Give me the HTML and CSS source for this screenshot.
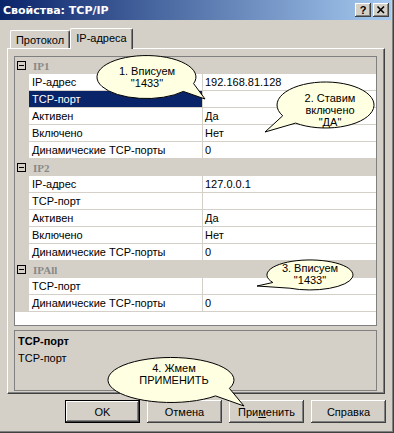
FILE: index.html
```html
<!DOCTYPE html>
<html>
  <head>
    <meta charset="utf-8" />
    <link rel="stylesheet" href="styles.css">
  </head>
  <body>
    <div class="window">
      <div class="titlebar">
        <div class="title">Свойства: TCP/IP</div>
        <div class="caption-buttons">
          <div class="caption-btn help">?</div>
          <div class="caption-btn">
            <svg width="16" height="14" viewBox="0 0 16 14">
              <path d="M4.5 3.5 L11 10 M11 3.5 L4.5 10" stroke="#000" stroke-width="1.6" fill="none" />
            </svg>
          </div>
        </div>
      </div>

      <div class="tabs">
        <div class="tab">Протокол</div>
        <div class="tab active">IP-адреса</div>
      </div>

      <div class="tab-panel">
        <div class="grid">
          <div class="category"><span class="expander"></span><span class="category-name">IP1</span></div>
          <div class="prop"><div class="name">IP-адрес</div><div class="value">192.168.81.128</div></div>
          <div class="prop selected"><div class="name">TCP-порт</div><div class="value"></div></div>
          <div class="prop"><div class="name">Активен</div><div class="value">Да</div></div>
          <div class="prop"><div class="name">Включено</div><div class="value">Нет</div></div>
          <div class="prop"><div class="name">Динамические TCP-порты</div><div class="value">0</div></div>

          <div class="category"><span class="expander"></span><span class="category-name">IP2</span></div>
          <div class="prop"><div class="name">IP-адрес</div><div class="value">127.0.0.1</div></div>
          <div class="prop"><div class="name">TCP-порт</div><div class="value"></div></div>
          <div class="prop"><div class="name">Активен</div><div class="value">Да</div></div>
          <div class="prop"><div class="name">Включено</div><div class="value">Нет</div></div>
          <div class="prop"><div class="name">Динамические TCP-порты</div><div class="value">0</div></div>

          <div class="category"><span class="expander"></span><span class="category-name">IPAll</span></div>
          <div class="prop"><div class="name">TCP-порт</div><div class="value"></div></div>
          <div class="prop"><div class="name">Динамические TCP-порты</div><div class="value">0</div></div>
        </div>

        <div class="description">
          <div class="description-title">TCP-порт</div>
          <div class="description-text">TCP-порт</div>
        </div>
      </div>

      <div class="buttons">
        <button class="button default">OK</button>
        <button class="button">Отмена</button>
        <button class="button">При<u>м</u>енить</button>
        <button class="button">Справка</button>
      </div>

      <!-- hint callouts drawn over the dialog -->
      <svg class="callouts" width="394" height="433" viewBox="0 0 394 433">
        <path class="bubble" d="M193.6 83.6 A49.5 21.5 0 1 0 183.3 91.4 L205 99 Z" />
        <text class="callout-text" x="147" y="75">1. Вписуем</text>
        <text class="callout-text" x="147" y="87">"1433"</text>

        <path class="bubble" d="M295.6 123.1 A48.5 23 0 1 0 282.7 115.8 L265 132 Z" />
        <text class="callout-text" x="330" y="102">2. Ставим</text>
        <text class="callout-text" x="330" y="114">включено</text>
        <text class="callout-text" x="330" y="126">"ДА"</text>

        <path class="bubble" d="M289.8 288.2 A43 15 0 1 0 272.8 282.5 L257 286 Z" />
        <text class="callout-text" x="310" y="272">3. Вписуем</text>
        <text class="callout-text" x="310" y="284">"1433"</text>

        <path class="bubble" d="M229.4 388.4 A63 22.5 0 1 0 215.5 395.9 L244 406 Z" />
        <text class="callout-text" x="174" y="372">4. Жмем</text>
        <text class="callout-text" x="174" y="384">ПРИМЕНИТЬ</text>
      </svg>
    </div>
  </body>
</html>
```

FILE: styles.css
```css
body {
  margin: 0;
  font-family: 'Liberation Sans', Arial, sans-serif;
  font-size: 11px;
  color: #000;
  background: #d4d0c8;
}

.window {
  position: relative;
  width: 394px;
  height: 433px;
  background: #d4d0c8;
  box-shadow: inset -1px -1px #404040, inset -2px -2px #808080;
  display: flex;
  flex-direction: column;
  overflow: hidden;
}

.titlebar {
  height: 20px;
  margin-right: 3px;
  padding: 0 2px 0 3px;
  display: flex;
  align-items: center;
  justify-content: space-between;
  background: linear-gradient(to right, #0a246a, #a6caf0);
}

.title {
  color: #fff;
  font-family: 'DejaVu Sans', Verdana, sans-serif;
  font-weight: bold;
  font-size: 11px;
}

.caption-buttons {
  display: flex;
  gap: 2px;
}

.caption-btn {
  width: 16px;
  height: 14px;
  background: #d4d0c8;
  box-shadow: inset -1px -1px #404040, inset 1px 1px #fff, inset -2px -2px #808080;
  display: flex;
  align-items: center;
  justify-content: center;
}

.caption-btn.help {
  font-weight: bold;
  font-size: 11px;
  line-height: 14px;
}

.caption-btn svg {
  display: block;
}

/* tabs */

.tabs {
  display: flex;
  align-items: flex-end;
  height: 20px;
  margin: 8px 0 0 10px;
}

.tab {
  width: 60px;
  height: 18px;
  box-sizing: border-box;
  padding-top: 1px;
  text-align: center;
  line-height: 16px;
  background: #d4d0c8;
  border-top: 1px solid #fff;
  border-left: 1px solid #fff;
  border-right: 1px solid #404040;
  border-top-left-radius: 2px;
  border-top-right-radius: 2px;
  box-shadow: inset -1px 0 #808080;
}

.tab.active {
  width: 63px;
  height: 21px;
  padding-top: 1px;
  margin-bottom: -1px;
  z-index: 1;
}

.tab-panel {
  width: 378px;
  height: 346px;
  margin-left: 7px;
  box-sizing: border-box;
  padding: 7px 7px 0 6px;
  border-top: 1px solid #fff;
  border-left: 1px solid #fff;
  border-right: 1px solid #404040;
  border-bottom: 1px solid #404040;
  box-shadow: inset -1px -1px #808080;
}

/* property grid */

.grid {
  height: 270px;
  box-sizing: border-box;
  border: 1px solid #808080;
  background: #fff;
}

.category {
  display: flex;
  align-items: center;
  height: 17px;
  background: #d4d0c8;
}

.expander {
  position: relative;
  width: 9px;
  height: 9px;
  box-sizing: border-box;
  margin-left: 2px;
  border: 1px solid #000;
}

.expander::after {
  content: '';
  position: absolute;
  left: 1px;
  top: 3px;
  width: 5px;
  height: 1px;
  background: #000;
}

.category-name {
  margin-left: 7px;
  font-family: 'Liberation Serif', 'Times New Roman', serif;
  font-weight: bold;
  font-size: 11px;
  color: #888;
}

.prop {
  display: flex;
  height: 17px;
  padding-left: 14px;
  background: #d4d0c8;
}

.name,
.value {
  box-sizing: border-box;
  height: 17px;
  line-height: 16px;
  background: #fff;
  border-bottom: 1px solid #d4d0c8;
  white-space: nowrap;
}

.name {
  width: 173px;
  padding-left: 3px;
}

.value {
  flex: 1;
  padding-left: 2px;
  border-left: 1px solid #d4d0c8;
}

.prop.selected .name {
  background: #0a246a;
  color: #fff;
}

.description {
  height: 61px;
  margin-top: 4px;
  box-sizing: border-box;
  padding: 4px 3px;
  border: 1px solid #808080;
}

.description-title {
  font-weight: bold;
  line-height: 13px;
}

.description-text {
  margin-top: 4px;
  line-height: 13px;
}

/* dialog buttons */

.buttons {
  display: flex;
  justify-content: flex-end;
  gap: 7px;
  margin-top: 6px;
  padding-right: 8px;
}

.button {
  width: 75px;
  height: 23px;
  padding: 0;
  border: none;
  background: #d4d0c8;
  font-family: 'Liberation Sans', Arial, sans-serif;
  font-size: 11px;
  color: #000;
  box-shadow: inset -1px -1px #404040, inset 1px 1px #fff, inset -2px -2px #808080;
}

.button.default {
  border: 1px solid #000;
}

/* callouts */

.callouts {
  position: absolute;
  left: 0;
  top: 0;
  pointer-events: none;
}

.bubble {
  fill: #ffffe1;
  stroke: #000;
  stroke-width: 1;
}

.callout-text {
  font-family: 'Liberation Sans', Arial, sans-serif;
  font-size: 11px;
  text-anchor: middle;
  fill: #000;
}
```
